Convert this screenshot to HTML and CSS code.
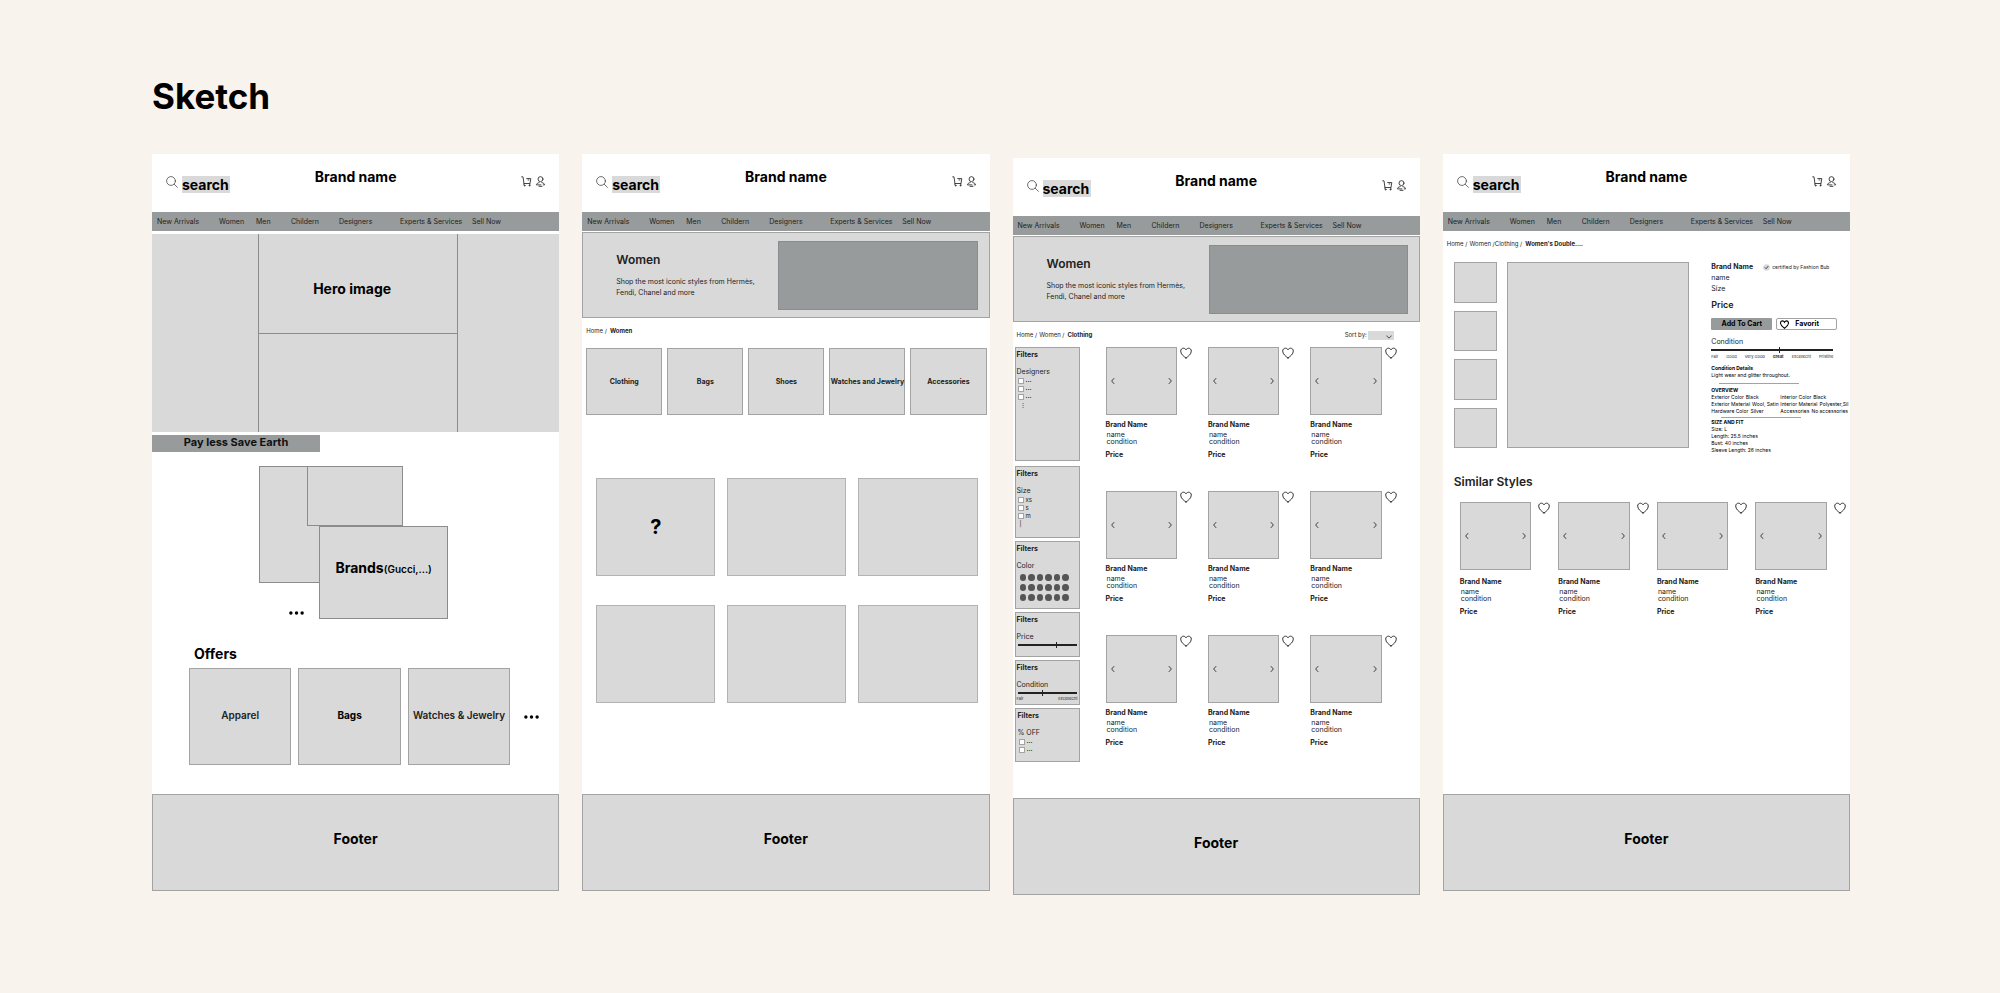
FILE: index.html
```html
<!DOCTYPE html>
<html lang="en">
<head>
    <meta charset="UTF-8">
    <meta name="viewport" content="width=device-width, initial-scale=1.0">
    <title>Sketch</title>
    <link rel="stylesheet" href="styles.css">
</head>
<body>
    <svg class="sprite" aria-hidden="true">
        <symbol id="i-search" viewBox="0 0 12 12"><circle cx="5" cy="5" r="4.4"/><path d="M8.3 8.3 11.4 11.4"/></symbol>
        <symbol id="i-cart" viewBox="0 0 12 12"><path d="M.8.9h1.4l1 7.3h6.6l.9-5.4H6.2M7.7 4.3h.9"/><path d="M3.2 8.2v1.2M9.6 8.2v1.2"/><circle cx="3.9" cy="10.5" r=".5"/><circle cx="9.2" cy="10.5" r=".5"/></symbol>
        <symbol id="i-user" viewBox="0 0 12 12"><circle cx="6" cy="3.4" r="2.7"/><path d="M4.6 7.2C2.8 7.4 1.6 8.4 1.6 9.7H6.5M7.4 7.2c1.8.2 3 1.200 3 2.500H9M4.400 11.300h3.200"/></symbol>
        <symbol id="i-heart" viewBox="0 0 12 12"><path d="M6 11C3.6 9.4.7 7 .7 4.1.7 2.3 1.9 1.2 3.4 1.2 4.6 1.2 5.5 1.9 6 2.9c.5-1 1.4-1.7 2.6-1.7 1.5 0 2.7 1.1 2.7 2.9C11.3 7 8.4 9.4 6 11Z"/></symbol>
        <symbol id="i-prev" viewBox="0 0 4 6"><path d="M3 .6C1.5 1.4 1 2.2 1 3s.5 1.6 2 2.4"/></symbol>
        <symbol id="i-next" viewBox="0 0 4 6"><path d="M1 .6C2.5 1.4 3 2.2 3 3s-.5 1.6-2 2.4"/></symbol>
        <symbol id="i-down" viewBox="0 0 6 4"><path d="M1 1c.6 1.2 1.2 1.700 2 1.700S4.400 2.200 5 1"/></symbol>
        <symbol id="i-dots" viewBox="0 0 16 4"><circle cx="2" cy="2" r="1.8"/><circle cx="8" cy="2" r="1.8"/><circle cx="14" cy="2" r="1.8"/></symbol>
        <symbol id="i-check" viewBox="0 0 8 8"><circle cx="4" cy="4" r="3.8" fill="#d9d9d9" stroke="none"/><path d="M2.4 4.2 3.6 5.4 5.8 2.6"/></symbol>
    </svg>

    <h1>Sketch</h1>

    <div class="board">
        <!-- home -->
        <section class="screen">
            <header class="top">
                <label class="search"><svg class="icon"><use href="#i-search"/></svg><input type="text" placeholder="search" aria-label="search"></label>
                <div class="brand">Brand name</div>
                <div class="account">
                    <button aria-label="Cart"><svg class="icon"><use href="#i-cart"/></svg></button>
                    <button aria-label="Account"><svg class="icon"><use href="#i-user"/></svg></button>
                </div>
            </header>
            <nav class="menu">
                <a href="#">New Arrivals</a><a href="#">Women</a><a href="#">Men</a><a href="#">Childern</a><a href="#">Designers</a><a href="#">Experts &amp; Services</a><a href="#">Sell Now</a>
            </nav>
            <div class="hero">
                <div class="hero-mid">
                    <h2>Hero image</h2>
                </div>
            </div>
            <div class="slogan">Pay less Save Earth</div>
            <div class="brands">
                <div class="box brand-a"></div>
                <div class="box brand-b"></div>
                <div class="box brand-c"><h2>Brands<small>(Gucci,...)</small></h2></div>
                <svg class="dots"><use href="#i-dots"/></svg>
            </div>
            <div class="offers">
                <h2>Offers</h2>
                <div class="offer-row">
                    <a class="box" href="#">Apparel</a>
                    <a class="box strong" href="#">Bags</a>
                    <a class="box" href="#">Watches &amp; Jewelry</a>
                    <svg class="dots"><use href="#i-dots"/></svg>
                </div>
            </div>
            <footer class="box">Footer</footer>
        </section>

        <!-- women -->
        <section class="screen">
            <header class="top">
                <label class="search"><svg class="icon"><use href="#i-search"/></svg><input type="text" placeholder="search" aria-label="search"></label>
                <div class="brand">Brand name</div>
                <div class="account">
                    <button aria-label="Cart"><svg class="icon"><use href="#i-cart"/></svg></button>
                    <button aria-label="Account"><svg class="icon"><use href="#i-user"/></svg></button>
                </div>
            </header>
            <nav class="menu">
                <a href="#">New Arrivals</a><a href="#">Women</a><a href="#">Men</a><a href="#">Childern</a><a href="#">Designers</a><a href="#">Experts &amp; Services</a><a href="#">Sell Now</a>
            </nav>
            <div class="banner box">
                <div class="banner-text">
                    <h3>Women</h3>
                    <p>Shop the most iconic styles from Hermès, Fendi, Chanel and more</p>
                </div>
                <div class="banner-image"></div>
            </div>
            <div class="crumbs"><a href="#">Home /</a> <b>Women</b></div>
            <div class="categories">
                <a class="box" href="#">Clothing</a>
                <a class="box" href="#">Bags</a>
                <a class="box" href="#">Shoes</a>
                <a class="box" href="#">Watches and Jewelry</a>
                <a class="box" href="#">Accessories</a>
            </div>
            <div class="tiles">
                <div class="box">?</div>
                <div class="box"></div>
                <div class="box"></div>
                <div class="box"></div>
                <div class="box"></div>
                <div class="box"></div>
            </div>
            <footer class="box">Footer</footer>
        </section>

        <!-- clothing list -->
        <section class="screen lower">
            <header class="top">
                <label class="search"><svg class="icon"><use href="#i-search"/></svg><input type="text" placeholder="search" aria-label="search"></label>
                <div class="brand">Brand name</div>
                <div class="account">
                    <button aria-label="Cart"><svg class="icon"><use href="#i-cart"/></svg></button>
                    <button aria-label="Account"><svg class="icon"><use href="#i-user"/></svg></button>
                </div>
            </header>
            <nav class="menu">
                <a href="#">New Arrivals</a><a href="#">Women</a><a href="#">Men</a><a href="#">Childern</a><a href="#">Designers</a><a href="#">Experts &amp; Services</a><a href="#">Sell Now</a>
            </nav>
            <div class="banner box">
                <div class="banner-text">
                    <h3>Women</h3>
                    <p>Shop the most iconic styles from Hermès, Fendi, Chanel and more</p>
                </div>
                <div class="banner-image"></div>
            </div>
            <div class="crumbs">
                <a href="#">Home /</a><a href="#">Women /</a> <b>Clothing</b>
                <div class="sort">
                    <label for="sort">Sort by:</label>
                    <span class="select-wrap"><select id="sort"><option></option></select><svg><use href="#i-down"/></svg></span>
                </div>
            </div>
            <div class="listing">
                <aside class="filters">
                    <div class="box filter filter-designers">
                        <h4>Filters</h4>
                        <p>Designers</p>
                        <label><input type="checkbox"><span>...</span></label>
                        <label><input type="checkbox"><span>...</span></label>
                        <label><input type="checkbox"><span>...</span></label>
                        <span class="more">⋮</span>
                    </div>
                    <div class="box filter filter-size">
                        <h4>Filters</h4>
                        <p>Size</p>
                        <label><input type="checkbox">xs</label>
                        <label><input type="checkbox">s</label>
                        <label><input type="checkbox">m</label>
                        <span class="more">|</span>
                    </div>
                    <div class="box filter filter-color">
                        <h4>Filters</h4>
                        <p>Color</p>
                        <div class="swatches">
                            <i></i><i></i><i></i><i></i><i></i><i></i>
                            <i></i><i></i><i></i><i></i><i></i><i></i>
                            <i></i><i></i><i></i><i></i><i></i><i></i>
                        </div>
                    </div>
                    <div class="box filter filter-range">
                        <h4>Filters</h4>
                        <p><label for="price">Price</label></p>
                        <input type="range" id="price" value="67">
                    </div>
                    <div class="box filter filter-range">
                        <h4>Filters</h4>
                        <p><label for="condition">Condition</label></p>
                        <input type="range" id="condition" value="43">
                        <div class="scale"><span>Fair</span><span>Excellecnt</span></div>
                    </div>
                    <div class="box filter filter-off">
                        <h4>Filters</h4>
                        <p>% OFF</p>
                        <label><input type="checkbox"><span>...</span></label>
                        <label><input type="checkbox"><span>...</span></label>
                    </div>
                </aside>
                <div class="products">
                    <article class="product">
                        <div class="box photo"><button aria-label="Previous"><svg><use href="#i-prev"/></svg></button><button aria-label="Next"><svg><use href="#i-next"/></svg></button></div>
                        <button class="heart" aria-label="Favorite"><svg class="icon"><use href="#i-heart"/></svg></button>
                        <div class="info"><h4>Brand Name</h4><p>name<br>condition</p><b>Price</b></div>
                    </article>
                    <article class="product">
                        <div class="box photo"><button aria-label="Previous"><svg><use href="#i-prev"/></svg></button><button aria-label="Next"><svg><use href="#i-next"/></svg></button></div>
                        <button class="heart" aria-label="Favorite"><svg class="icon"><use href="#i-heart"/></svg></button>
                        <div class="info"><h4>Brand Name</h4><p>name<br>condition</p><b>Price</b></div>
                    </article>
                    <article class="product">
                        <div class="box photo"><button aria-label="Previous"><svg><use href="#i-prev"/></svg></button><button aria-label="Next"><svg><use href="#i-next"/></svg></button></div>
                        <button class="heart" aria-label="Favorite"><svg class="icon"><use href="#i-heart"/></svg></button>
                        <div class="info"><h4>Brand Name</h4><p>name<br>condition</p><b>Price</b></div>
                    </article>
                    <article class="product">
                        <div class="box photo"><button aria-label="Previous"><svg><use href="#i-prev"/></svg></button><button aria-label="Next"><svg><use href="#i-next"/></svg></button></div>
                        <button class="heart" aria-label="Favorite"><svg class="icon"><use href="#i-heart"/></svg></button>
                        <div class="info"><h4>Brand Name</h4><p>name<br>condition</p><b>Price</b></div>
                    </article>
                    <article class="product">
                        <div class="box photo"><button aria-label="Previous"><svg><use href="#i-prev"/></svg></button><button aria-label="Next"><svg><use href="#i-next"/></svg></button></div>
                        <button class="heart" aria-label="Favorite"><svg class="icon"><use href="#i-heart"/></svg></button>
                        <div class="info"><h4>Brand Name</h4><p>name<br>condition</p><b>Price</b></div>
                    </article>
                    <article class="product">
                        <div class="box photo"><button aria-label="Previous"><svg><use href="#i-prev"/></svg></button><button aria-label="Next"><svg><use href="#i-next"/></svg></button></div>
                        <button class="heart" aria-label="Favorite"><svg class="icon"><use href="#i-heart"/></svg></button>
                        <div class="info"><h4>Brand Name</h4><p>name<br>condition</p><b>Price</b></div>
                    </article>
                    <article class="product">
                        <div class="box photo"><button aria-label="Previous"><svg><use href="#i-prev"/></svg></button><button aria-label="Next"><svg><use href="#i-next"/></svg></button></div>
                        <button class="heart" aria-label="Favorite"><svg class="icon"><use href="#i-heart"/></svg></button>
                        <div class="info"><h4>Brand Name</h4><p>name<br>condition</p><b>Price</b></div>
                    </article>
                    <article class="product">
                        <div class="box photo"><button aria-label="Previous"><svg><use href="#i-prev"/></svg></button><button aria-label="Next"><svg><use href="#i-next"/></svg></button></div>
                        <button class="heart" aria-label="Favorite"><svg class="icon"><use href="#i-heart"/></svg></button>
                        <div class="info"><h4>Brand Name</h4><p>name<br>condition</p><b>Price</b></div>
                    </article>
                    <article class="product">
                        <div class="box photo"><button aria-label="Previous"><svg><use href="#i-prev"/></svg></button><button aria-label="Next"><svg><use href="#i-next"/></svg></button></div>
                        <button class="heart" aria-label="Favorite"><svg class="icon"><use href="#i-heart"/></svg></button>
                        <div class="info"><h4>Brand Name</h4><p>name<br>condition</p><b>Price</b></div>
                    </article>
                </div>
            </div>
            <footer class="box">Footer</footer>
        </section>

        <!-- product page -->
        <section class="screen">
            <header class="top">
                <label class="search"><svg class="icon"><use href="#i-search"/></svg><input type="text" placeholder="search" aria-label="search"></label>
                <div class="brand">Brand name</div>
                <div class="account">
                    <button aria-label="Cart"><svg class="icon"><use href="#i-cart"/></svg></button>
                    <button aria-label="Account"><svg class="icon"><use href="#i-user"/></svg></button>
                </div>
            </header>
            <nav class="menu">
                <a href="#">New Arrivals</a><a href="#">Women</a><a href="#">Men</a><a href="#">Childern</a><a href="#">Designers</a><a href="#">Experts &amp; Services</a><a href="#">Sell Now</a>
            </nav>
            <div class="crumbs"><a href="#">Home /</a><a href="#">Women /Clothing /</a> <b>Women's Double....</b></div>
            <div class="detail">
                <div class="thumbs">
                    <div class="box"></div>
                    <div class="box"></div>
                    <div class="box"></div>
                    <div class="box"></div>
                </div>
                <div class="box"></div>
                <div class="specs">
                    <div class="spec-title">
                        <h4>Brand Name</h4>
                        <svg><use href="#i-check"/></svg>
                        <span>certified by Fashion Bub</span>
                    </div>
                    <p class="spec-line">name</p>
                    <p class="spec-line">Size</p>
                    <h3>Price</h3>
                    <div class="actions">
                        <button class="add">Add To Cart</button>
                        <button class="favorite"><svg class="icon"><use href="#i-heart"/></svg>Favorit</button>
                    </div>
                    <div class="rating">
                        <label for="grade">Condition</label>
                        <input type="range" id="grade" value="56">
                        <div class="scale"><span>Fair</span><span>Good</span><span>Very Good</span><b>Great</b><span>Excellecnt</span><span>Pristine</span></div>
                    </div>
                    <div class="notes">
                        <h5>Condition Details</h5>
                        <p>Light wear and glitter throughout.</p>
                        <hr>
                        <h5>OVERVIEW</h5>
                        <div class="overview">
                            <dl>
                                <div><dt>Exterior Color</dt><dd>Black</dd></div>
                                <div><dt>Exterior Material</dt><dd>Wool, Satin</dd></div>
                                <div><dt>Hardware Color</dt><dd>Silver</dd></div>
                            </dl>
                            <dl>
                                <div><dt>Interior Color</dt><dd>Black</dd></div>
                                <div><dt>Interior Material</dt><dd>Polyester,Sil</dd></div>
                                <div><dt>Accessories</dt><dd>No accessories</dd></div>
                            </dl>
                        </div>
                        <hr class="tight">
                        <h5>SIZE AND FIT</h5>
                        <p>Size: L<br>Length: 25.5 inches<br>Bust: 40 inches<br>Sleeve Length: 26 inches</p>
                    </div>
                </div>
            </div>
            <h3 class="similar-title">Similar Styles</h3>
            <div class="products similar">
                <article class="product">
                    <div class="box photo"><button aria-label="Previous"><svg><use href="#i-prev"/></svg></button><button aria-label="Next"><svg><use href="#i-next"/></svg></button></div>
                    <button class="heart" aria-label="Favorite"><svg class="icon"><use href="#i-heart"/></svg></button>
                    <div class="info"><h4>Brand Name</h4><p>name<br>condition</p><b>Price</b></div>
                </article>
                <article class="product">
                    <div class="box photo"><button aria-label="Previous"><svg><use href="#i-prev"/></svg></button><button aria-label="Next"><svg><use href="#i-next"/></svg></button></div>
                    <button class="heart" aria-label="Favorite"><svg class="icon"><use href="#i-heart"/></svg></button>
                    <div class="info"><h4>Brand Name</h4><p>name<br>condition</p><b>Price</b></div>
                </article>
                <article class="product">
                    <div class="box photo"><button aria-label="Previous"><svg><use href="#i-prev"/></svg></button><button aria-label="Next"><svg><use href="#i-next"/></svg></button></div>
                    <button class="heart" aria-label="Favorite"><svg class="icon"><use href="#i-heart"/></svg></button>
                    <div class="info"><h4>Brand Name</h4><p>name<br>condition</p><b>Price</b></div>
                </article>
                <article class="product">
                    <div class="box photo"><button aria-label="Previous"><svg><use href="#i-prev"/></svg></button><button aria-label="Next"><svg><use href="#i-next"/></svg></button></div>
                    <button class="heart" aria-label="Favorite"><svg class="icon"><use href="#i-heart"/></svg></button>
                    <div class="info"><h4>Brand Name</h4><p>name<br>condition</p><b>Price</b></div>
                </article>
            </div>
            <footer class="box">Footer</footer>
        </section>
    </div>
</body>
</html>
```

FILE: styles.css
```css
* {
    box-sizing: border-box;
    margin: 0;
    padding: 0;
}
body {
    padding: 74px 150px 60px 152px;
    background-color: #f8f3ed;
    font-family: Inter, sans-serif;
    font-size: 7px;
    line-height: 10px;
    color: #222;
}
a {
    color: inherit;
    text-decoration: none;
}
button {
    background: none;
    border: none;
    font: inherit;
    color: inherit;
    cursor: pointer;
}
svg {
    display: block;
    fill: none;
    stroke: #333;
    stroke-linecap: round;
}
.sprite {
    display: none;
}
.icon {
    width: 12px;
    height: 12px;
    flex: none;
}
h1 {
    font-size: 35px;
    line-height: 44px;
    margin-bottom: 36px;
    color: #000;
}
h2 {
    font-size: 14px;
    line-height: 18px;
    color: #000;
}
h3 {
    font-size: 12px;
    line-height: 16px;
    font-weight: 600;
}
h4 {
    font-size: 7px;
    font-weight: 700;
}

.board {
    display: grid;
    grid-template-columns: repeat(4, minmax(0, 1fr));
    gap: 23px;
    align-items: start;
}
.screen {
    display: flex;
    flex-direction: column;
    min-height: 737px;
    background-color: #fff;
    overflow: hidden;
}
.lower {
    margin-top: 4px;
}
.box {
    background-color: #d9d9d9;
    border: 1px solid #a3a3a3;
}
footer {
    display: flex;
    align-items: center;
    justify-content: center;
    height: 97px;
    margin-top: auto;
    padding-bottom: 8px;
    font-size: 14px;
    font-weight: 700;
    color: #000;
}

/* header */
.top {
    display: grid;
    grid-template-columns: 1fr auto 1fr;
    align-items: start;
    height: 58px;
    padding: 14px 13px 0;
}
.brand {
    font-size: 14px;
    line-height: 17px;
    font-weight: 700;
    color: #000;
}
.search {
    display: flex;
    gap: 4px;
    margin-top: 8px;
}
.search .icon {
    margin-left: 1px;
    stroke-width: 0.7;
}
.search input {
    width: 48px;
    height: 17px;
    border: none;
    background-color: #d9d9d9;
    font: 700 14px/17px Inter, sans-serif;
    appearance: none;
}
.search input::placeholder {
    color: #000;
}
.account {
    display: flex;
    justify-content: flex-end;
    gap: 3px;
    margin-top: 8px;
}
.account .icon {
    width: 11px;
    height: 11px;
}
.menu {
    display: grid;
    grid-template-columns: 62px 37px 35px 48px 61px 72px auto;
    align-items: center;
    height: 19px;
    padding-left: 5px;
    background-color: #979b9b;
    white-space: nowrap;
}

/* home */
.hero {
    display: grid;
    grid-template-columns: 106fr 200fr 101fr;
    height: 198px;
    margin-top: 3px;
    background-color: #d9d9d9;
}
.hero-mid {
    grid-column: 2;
    border: solid #8c8c8c;
    border-width: 0 1px;
}
.hero-mid h2 {
    height: 100px;
    padding: 46px 12px 0 0;
    border-bottom: 1px solid #8c8c8c;
    text-align: center;
}
.slogan {
    width: 168px;
    height: 17px;
    margin-top: 3px;
    background-color: #979b9b;
    font-size: 11px;
    line-height: 14px;
    font-weight: 700;
    text-align: center;
    color: #111;
}
.brands {
    display: grid;
    grid-template-columns: 107fr 48fr 12fr 84fr 45fr 111fr;
    grid-template-rows: 60px 57px 36px;
    margin-top: 14px;
}
.brand-a {
    grid-area: 1 / 2 / 3 / 5;
    margin-right: 20px;
}
.brand-b {
    grid-area: 1 / 3 / 2 / 5;
}
.brand-c {
    grid-area: 2 / 4 / 4 / 6;
    display: flex;
    align-items: center;
    justify-content: center;
    padding-bottom: 8px;
}
.brands small {
    font-size: 10px;
    font-weight: 600;
}
.brand-a, .brand-b, .brand-c {
    border-color: #8c8c8c;
}
.dots {
    width: 15px;
    height: 4px;
    fill: #000;
    stroke: none;
}
.brands .dots {
    grid-area: 3 / 2 / 4 / 4;
    place-self: end;
    margin: 0 15px 4px 0;
}
.offers {
    margin-top: 26px;
    padding-left: 37px;
}
.offers h2 {
    margin: 0 0 5px 5px;
}
.offer-row {
    display: grid;
    grid-template-columns: repeat(3, 1fr) 28px;
    column-gap: 7px;
    align-items: center;
    padding-right: 14px;
}
.offer-row .box {
    display: flex;
    align-items: center;
    justify-content: center;
    height: 97px;
    padding-bottom: 4px;
    font-size: 10px;
    font-weight: 600;
    white-space: nowrap;
}
.offer-row .strong {
    font-weight: 700;
    color: #000;
}
.offer-row .dots {
    justify-self: center;
}

/* category banner */
.banner {
    display: grid;
    grid-template-columns: 196fr 200fr;
    height: 86px;
    margin-top: 1px;
    padding: 8px 11px 7px 0;
}
.banner-text {
    padding: 11px 20px 0 33px;
}
.banner-text p {
    margin-top: 8px;
    line-height: 11px;
}
.banner-image {
    background-color: #979b9b;
    border: 1px solid #8a8d8d;
}
.crumbs {
    display: flex;
    align-items: center;
    gap: 2px;
    padding: 8px 26px 0 4px;
    font-size: 6px;
}
.crumbs b {
    margin-left: 1px;
}
.sort {
    display: flex;
    align-items: center;
    gap: 1px;
    margin-left: auto;
}
.select-wrap {
    position: relative;
}
.select-wrap select {
    display: block;
    width: 26px;
    height: 9px;
    border: none;
    background-color: #d9d9d9;
    appearance: none;
}
.select-wrap svg {
    position: absolute;
    right: 2px;
    top: 4px;
    width: 6px;
    height: 4px;
}
.categories {
    display: grid;
    grid-template-columns: repeat(5, minmax(0, 1fr));
    gap: 5px;
    margin: 12px 3px 0 4px;
}
.categories .box {
    display: flex;
    align-items: center;
    justify-content: center;
    height: 67px;
    font-weight: 700;
    white-space: nowrap;
}
.tiles {
    display: grid;
    grid-template-columns: repeat(3, 1fr);
    gap: 29px 12px;
    margin: 63px 12px 0 14px;
}
.tiles .box {
    display: flex;
    align-items: center;
    justify-content: center;
    height: 98px;
    border-color: #b3b3b3;
    font-size: 20px;
    font-weight: 700;
    color: #000;
}

/* listing */
.listing {
    display: flex;
    gap: 26px;
    padding: 7px 23px 0 2px;
}
.filters {
    display: flex;
    flex-direction: column;
    gap: 3px;
    width: 65px;
}
.filter {
    height: 45px;
    padding: 2px 1px;
}
.filter-designers {
    height: 114px;
    margin-bottom: 2px;
}
.filter-size {
    height: 72px;
}
.filter-color {
    height: 68px;
}
.filter-off {
    height: 54px;
    padding-left: 2px;
}
.filter p {
    margin-top: 7px;
}
.filter > label {
    display: flex;
    align-items: center;
    gap: 2px;
    height: 8px;
    font-size: 6px;
    line-height: 8px;
}
.filter > label span {
    height: 10px;
    font-weight: 700;
    line-height: 8px;
}
.filter input[type="checkbox"] {
    width: 6px;
    height: 6px;
    margin-left: 1px;
    border: 1px solid #a3a3a3;
    background-color: #fff;
    appearance: none;
}
.more {
    display: block;
    padding-left: 3px;
    font-size: 6px;
    line-height: 8px;
}
.swatches {
    display: grid;
    grid-template-columns: repeat(6, 1fr);
    gap: 3px 2px;
    margin: 3px 9px 0 3px;
}
.swatches i {
    height: 7px;
    border-radius: 50%;
    background-color: #555;
}
input[type="range"] {
    display: block;
    width: 100%;
    height: 6px;
    background: linear-gradient(#222, #222) center / 100% 2px no-repeat;
    appearance: none;
}
input[type="range"]::-webkit-slider-thumb {
    width: 1px;
    height: 6px;
    background-color: #222;
    appearance: none;
}
.filter-range input {
    width: 59px;
    margin-left: 1px;
}
.scale {
    display: flex;
    justify-content: space-between;
    font-size: 4px;
    line-height: 5px;
}

/* product card */
.products {
    display: grid;
    grid-template-columns: repeat(3, 1fr);
    gap: 31px 16px;
    flex: 1;
    align-content: start;
}
.product {
    display: grid;
    grid-template-columns: 1fr 12px;
    column-gap: 3px;
    align-items: start;
}
.photo {
    display: flex;
    align-items: center;
    justify-content: space-between;
    height: 68px;
    padding: 0 4px;
}
.photo svg {
    width: 4px;
    height: 6px;
}
.info {
    grid-column: 1 / 3;
    margin-top: 5px;
}
.info p {
    margin: 1px 0 5px 1px;
    line-height: 7px;
}
.info b {
    display: block;
}

/* product page */
.detail {
    display: grid;
    grid-template-columns: minmax(0, 43fr) minmax(0, 183fr) minmax(0, 151fr);
    column-gap: 10px;
    margin-top: 13px;
    padding-left: 11px;
}
.detail > .box {
    height: 186px;
}
.thumbs {
    display: grid;
    gap: 8px;
    height: 186px;
}
.specs {
    height: 200px;
    margin-left: 12px;
    white-space: nowrap;
}
.spec-title {
    display: flex;
    align-items: center;
    font-size: 5px;
}
.spec-title svg {
    width: 7px;
    height: 7px;
    margin: 0 2px 0 10px;
}
.spec-line {
    margin-top: 1px;
}
.specs h3 {
    margin-top: 4px;
    font-size: 9px;
    line-height: 14px;
}
.actions {
    display: flex;
    gap: 4px;
    margin-top: 6px;
}
.actions button {
    display: flex;
    align-items: center;
    justify-content: center;
    width: 61px;
    height: 12px;
    border-radius: 1px;
    font-weight: 700;
    color: #000;
}
.actions .add {
    background-color: #979b9b;
}
.actions .favorite {
    justify-content: flex-start;
    gap: 6px;
    padding-left: 3px;
    border: 1px solid #a3a3a3;
    border-radius: 2px;
}
.favorite .icon {
    width: 9px;
    height: 9px;
    stroke: #000;
    stroke-width: 1.5;
}
.rating {
    width: 122px;
    margin-top: 7px;
}
.rating label {
    display: block;
}
.rating .scale {
    margin-top: 1px;
}
.notes {
    margin-top: 6px;
    font-size: 5px;
    line-height: 7px;
    color: #000;
}
.notes h5 {
    font-size: 5px;
    font-weight: 700;
}
.notes hr {
    width: 80px;
    margin: 4px 0 3px 8px;
    border: none;
    border-top: 1px solid #a3a3a3;
}
.notes .tight {
    margin: 2px 0 1px 10px;
}
.overview {
    display: grid;
    grid-template-columns: 69px auto;
}
.overview dl div {
    display: flex;
    gap: 2px;
}
.similar-title {
    margin: 12px 0 0 11px;
}
.similar {
    flex: none;
    grid-template-columns: repeat(4, 1fr);
    column-gap: 8px;
    margin: 12px 4px 0 17px;
}
.similar .product {
    column-gap: 7px;
}
.similar .info {
    margin-top: 7px;
}
```
